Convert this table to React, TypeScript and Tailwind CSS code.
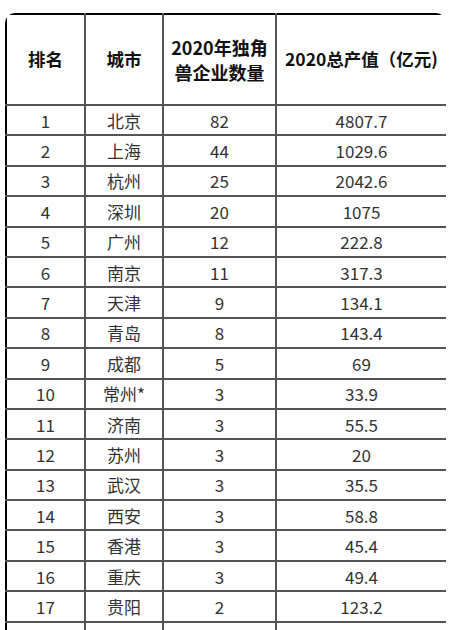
import * as React from "react";

// Ranking rows — rank, city, unicorn count, GDP (亿元).
const ROWS: [string, string, string, string][] = [
  ["1", "北京", "82", "4807.7"],
  ["2", "上海", "44", "1029.6"],
  ["3", "杭州", "25", "2042.6"],
  ["4", "深圳", "20", "1075"],
  ["5", "广州", "12", "222.8"],
  ["6", "南京", "11", "317.3"],
  ["7", "天津", "9", "134.1"],
  ["8", "青岛", "8", "143.4"],
  ["9", "成都", "5", "69"],
  ["10", "常州*", "3", "33.9"],
  ["11", "济南", "3", "55.5"],
  ["12", "苏州", "3", "20"],
  ["13", "武汉", "3", "35.5"],
  ["14", "西安", "3", "58.8"],
  ["15", "香港", "3", "45.4"],
  ["16", "重庆", "3", "49.4"],
  ["17", "贵阳", "2", "123.2"],
  ["", "", "", ""],
];

const FONT = { fontFamily: '"Noto Sans CJK SC", "Noto Sans", sans-serif' };

export default function App(): React.ReactElement {
  return (
    <div className="h-[630px] w-[451px] overflow-hidden bg-white" style={FONT}>
      <div className="ml-[5px] mt-[13px] w-[441px] overflow-hidden rounded-t-[10px]">
        <table className="w-[441px] table-fixed border-collapse border-x-2 border-t-2 border-x-black border-t-black">
          <colgroup>
            <col className="w-[79px]" />
            <col className="w-[78px]" />
            <col className="w-[113px]" />
            <col className="w-[171px]" />
          </colgroup>
          <thead>
            <tr className="h-[91px]">
              <th className="border-2 border-[#555] border-l-black border-t-black text-center align-middle text-[17.5px] font-bold text-[#111]">
                排名
              </th>
              <th className="border-2 border-[#555] border-t-black text-center align-middle text-[17.5px] font-bold text-[#111]">
                城市
              </th>
              <th className="border-2 border-[#555] border-t-black text-center align-middle text-[18px] font-bold leading-[25px] text-[#111]">
                2020年独角
                <br />
                兽企业数量
              </th>
              <th className="whitespace-nowrap border-2 border-[#555] border-r-black border-t-black text-center align-middle text-[17.5px] font-bold text-[#111]">
                2020总产值（亿元)
              </th>
            </tr>
          </thead>
          <tbody>
            {ROWS.map((r, i) => (
              <tr key={i} className="h-[30.4px]">
                <td className="border-2 border-[#555] border-l-black p-0 text-center align-middle text-[17px] leading-none text-[#333]">
                  {r[0]}
                </td>
                <td className="border-2 border-[#555] p-0 text-center align-middle text-[17px] leading-none text-[#333]">
                  {r[1]}
                </td>
                <td className="border-2 border-[#555] p-0 text-center align-middle text-[17px] leading-none text-[#333]">
                  {r[2]}
                </td>
                <td className="border-2 border-[#555] border-r-black p-0 text-center align-middle text-[17px] leading-none text-[#333]">
                  {r[3]}
                </td>
              </tr>
            ))}
          </tbody>
        </table>
      </div>
    </div>
  );
}
